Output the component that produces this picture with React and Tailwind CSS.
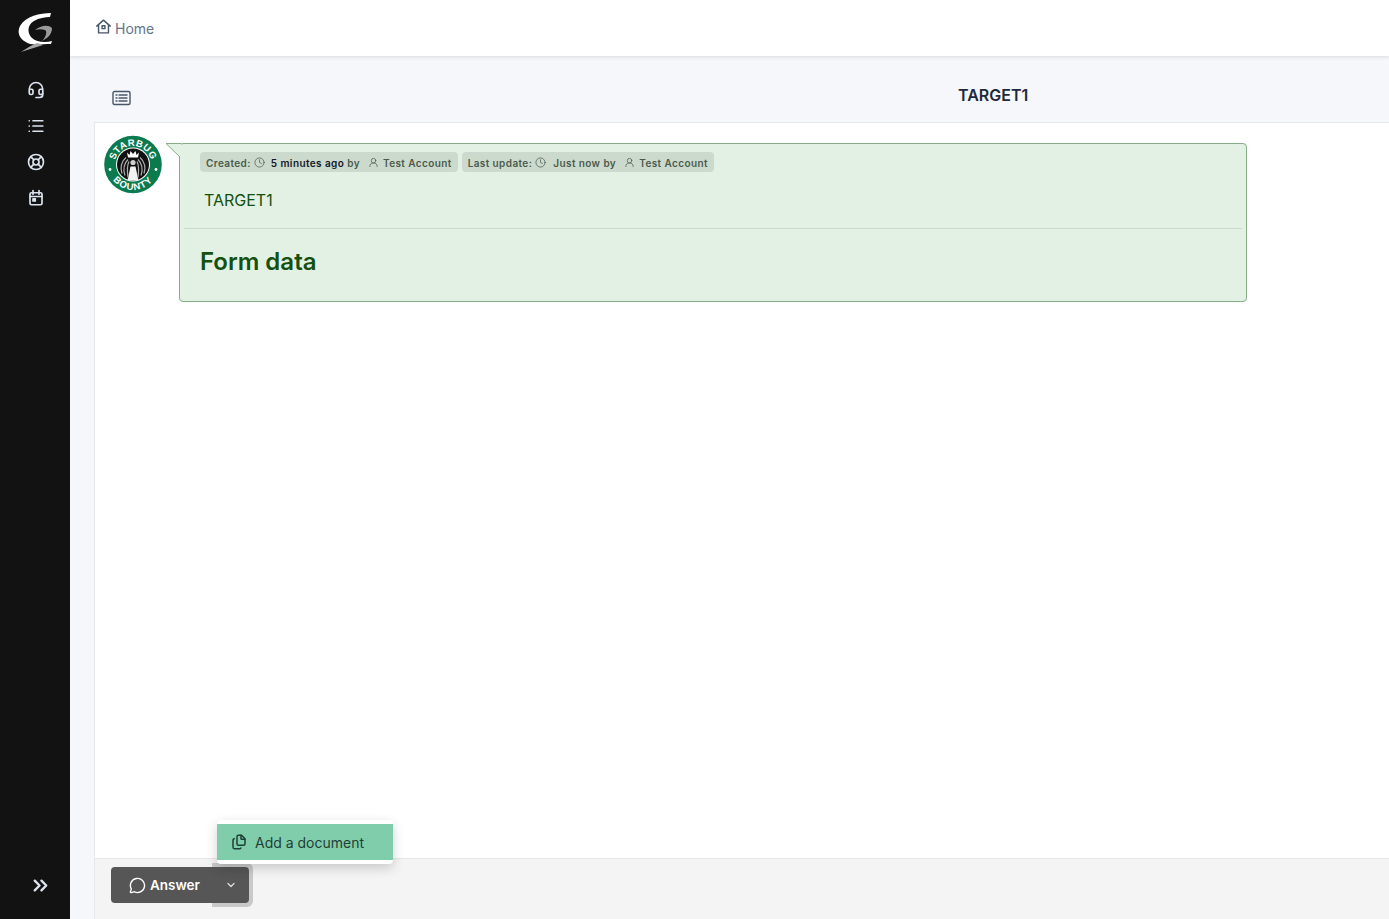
import React from "react";
import { Headset, List, LifeBuoy, ChevronsRight, ChevronDown, Clock, UserRound, MessageCircle, Files } from "lucide-react";

const Logo = () => (
  <svg width="36" height="41" viewBox="0 0 36 41">
    <path d="M33 1 C22 1 8 4 2 14 C-2 22 3 29 12 32 C17 33 26 32 33 32 L34 29 C27 31 18 30 14 26 C9 21 9 13 16 9 C21 6 27 5 32 5 Z" fill="#fff" />
    <path d="M17 18 C22 14 30 12 34 16 C34 22 30 26 24 29 C29 24 29 19 27 18 C24 17 20 17 17 18 Z" fill="#9a9a9a" />
    <path d="M3 40 C9 36 14 33 19 31 C22 32 24 32 25 33 C18 35 10 38 3 40 Z" fill="#a8a8a8" />
  </svg>
);

const Badge = () => (
  <svg width="58" height="59" viewBox="0 0 58 58">
    <defs>
      <path id="arcTop" d="M10.5 29 A18.5 18.5 0 0 1 47.5 29" />
      <path id="arcBottom" d="M3.5 29 A25.5 25.5 0 0 0 54.5 29" />
    </defs>
    <circle cx="29" cy="29" r="28.8" fill="#0b7a4f" />
    <circle cx="29" cy="29" r="17" fill="#fff" />
    <circle cx="29" cy="29" r="16" fill="#111" />
    <text fontFamily="Liberation Sans, sans-serif" fontSize="9.5" fontWeight="700" fill="#fff" textAnchor="middle" letterSpacing="0.4">
      <textPath href="#arcTop" startOffset="50%">STARBUG</textPath>
    </text>
    <text fontFamily="Liberation Sans, sans-serif" fontSize="9.5" fontWeight="700" fill="#fff" textAnchor="middle" letterSpacing="1">
      <textPath href="#arcBottom" startOffset="50%">BOUNTY</textPath>
    </text>
    <circle cx="6" cy="34" r="1.4" fill="#fff" />
    <circle cx="52" cy="34" r="1.4" fill="#fff" />
    <path d="M23 17 L25.5 19.5 L26.5 15.5 L29 18.5 L31.5 15.5 L32.5 19.5 L35 17 L34 22 L24 22 Z" fill="#fff" />
    <circle cx="29" cy="27" r="2.6" fill="#cfcfcf" />
    <path d="M26.5 31 H31.5 L34.5 45 H23.5 Z" fill="#f2f2f2" />
    <g fill="none" stroke="#b0b0b0" strokeWidth="1.2">
      <path d="M24 24 C20 28 19 34 21 40" />
      <path d="M22 22 C17 26 16 33 18 38" />
      <path d="M25 26 C23 30 23 35 24 42" />
      <path d="M34 24 C38 28 39 34 37 40" />
      <path d="M36 22 C41 26 42 33 40 38" />
      <path d="M33 26 C35 30 35 35 34 42" />
    </g>
  </svg>
);

const Meta = ({ label, time, dark, gap = "ml-[6px]" }) => (
  <div className="flex h-5 items-center rounded bg-[#ccdacd] px-1.5 pt-[2px] text-[10px] font-semibold tracking-[0.4px] text-[#4a5a4c]">
    <span>{label}</span>
    <Clock size={11} strokeWidth={1.6} className="ml-[3px] mb-[1px]" />
    <span className={dark ? gap + " text-[#111827]" : gap}>{time}</span>
    <span className="ml-[3px]">by</span>
    <UserRound size={11} strokeWidth={1.6} className="ml-[8px] mb-[2px]" />
    <span className="ml-[4px]">Test Account</span>
  </div>
);

export default function App() {
  return (
    <div className="flex h-[919px] w-full overflow-hidden bg-[#f5f7fb] font-['Inter',sans-serif]">
      <aside className="flex w-[70px] shrink-0 flex-col items-center bg-[#121212] text-[#dbe4ee]">
        <div className="mt-[12px] ml-[2px]">
          <Logo />
        </div>
        <nav className="mt-[28px] flex flex-col items-center gap-[18px] pl-[2px]">
          <Headset size={18} strokeWidth={2.25} />
          <List size={18} strokeWidth={2.25} />
          <LifeBuoy size={18} strokeWidth={2.25} />
          <svg width="18" height="18" viewBox="0 0 24 24" fill="none" stroke="currentColor" strokeWidth="2.25" strokeLinecap="round" strokeLinejoin="round">
            <rect x="4" y="5" width="16" height="16" rx="2" />
            <path d="M8 2v5M16 2v5M4 10h16" />
            <rect x="8" y="13" width="3" height="3" fill="currentColor" />
          </svg>
        </nav>
        <div className="mt-auto mb-[22px] ml-[10px]">
          <ChevronsRight size={23} strokeWidth={2.5} />
        </div>
      </aside>

      <div className="flex min-w-0 flex-1 flex-col">
        <header className="z-10 flex h-[56px] shrink-0 items-center bg-white pl-[25px] shadow-[0_1px_4px_rgba(0,0,0,0.12)]">
          <svg width="17" height="17" viewBox="0 0 24 24" fill="none" stroke="#475569" strokeWidth="2" strokeLinecap="round" strokeLinejoin="round" className="mb-[3px]">
            <path d="M2.5 11.5 12 3l9.5 8.5" />
            <path d="M5 10v11h14V10" />
            <rect x="10" y="11" width="4" height="4" />
          </svg>
          <span className="ml-[3px] mt-[1px] text-sm text-[#64748b]">Home</span>
        </header>

        <div className="flex h-[66px] shrink-0">
          <div className="pl-[42px] pt-[34px]">
            <svg width="19" height="16" viewBox="0 0 19 16" fill="none" stroke="#475569" strokeWidth="1.4" strokeLinecap="round">
              <rect x="1" y="1.5" width="17" height="13" rx="1.5" />
              <path d="M4 5h1M4 8h1M4 11h1M7 5h8M7 8h8M7 11h8" />
            </svg>
          </div>
          <h1 className="ml-[827px] pt-[27px] text-base font-semibold text-[#1e293b]">TARGET1</h1>
        </div>

        <div className="ml-[24px] flex min-h-0 flex-1 flex-col border-t border-l border-[#e5e7eb] bg-white">
          <main className="flex min-h-0 flex-1 items-start pl-[9px] pt-[12px]">
            <Badge />
            <div className="relative mt-[8px] ml-[17px] w-[1068px] rounded border border-[#86ad88] bg-[#e2f1e3] pb-[23px]">
              <svg width="15" height="15" viewBox="0 0 15 15" className="absolute top-[-1px] left-[-14px]">
                <path d="M0 .5 H15 V15 Z" fill="#e2f1e3" />
                <path d="M15 .5 H0 L14 14" fill="none" stroke="#86ad88" />
              </svg>
              <div className="flex gap-[4px] pl-[20px] pt-[8px]">
                <Meta label="Created:" time="5 minutes ago" dark />
                <Meta label="Last update:" time="Just now" gap="ml-[7px]" />
              </div>
              <p className="pl-[24px] pt-[16px] text-base text-[#14500f]">TARGET1</p>
              <div className="mx-[4px] mt-[16px] border-t border-[#cbdccc]" />
              <h2 className="pl-[20px] pt-[17px] text-2xl font-semibold text-[#14500f]">Form data</h2>
            </div>
          </main>

          <footer className="relative isolate flex h-[61px] shrink-0 items-start border-t border-[#e5e7eb] bg-[#f4f4f4] pl-[16px] pt-[8px]">
            <div className="absolute -top-[39px] left-[122px] z-10 w-[176px] rounded-sm bg-white py-[4px] shadow-[0_4px_12px_rgba(0,0,0,0.18)]">
              <div className="flex h-[36px] items-center bg-[#7fcdab] pl-[14px] text-sm text-[#1f3f36]">
                <Files size={16} strokeWidth={2.25} />
                <span className="ml-[8px] mt-[2px]">Add a document</span>
              </div>
            </div>
            <div className="flex h-[36px] items-center rounded bg-[#565656] text-[13.5px] font-semibold text-white">
              <button className="flex w-[101px] items-center pl-[18px]">
                <MessageCircle size={17} strokeWidth={2} className="mr-[4px]" />
                <span className="mt-[1px]">Answer</span>
              </button>
              <button className="relative flex h-[36px] w-[37px] items-center justify-center">
                <span className="absolute -top-[4px] -right-[4px] -bottom-[4px] left-0 -z-10 rounded-r-md bg-[#c9c9c9]" />
                <ChevronDown size={12} strokeWidth={2.5} className="text-[#dddddd]" />
              </button>
            </div>
          </footer>
        </div>
      </div>
    </div>
  );
}
